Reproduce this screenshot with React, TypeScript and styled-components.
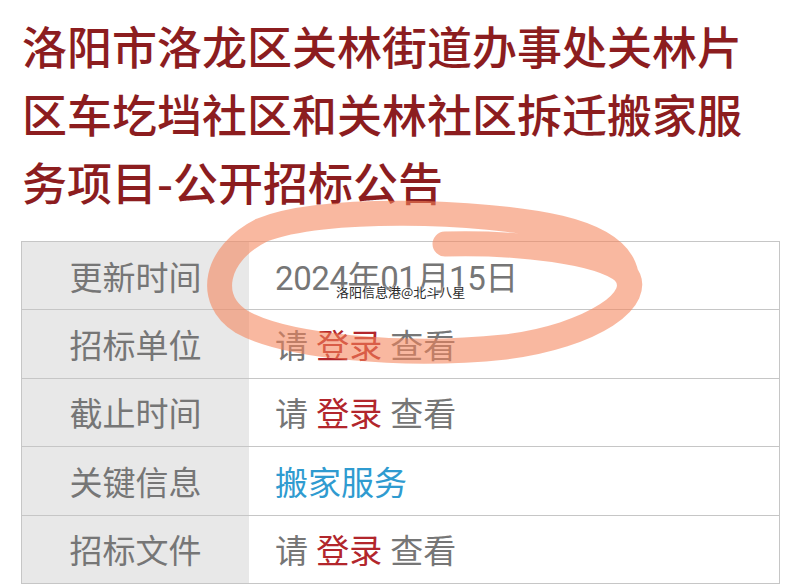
import styled, { createGlobalStyle } from 'styled-components'

const GlobalStyle = createGlobalStyle`
  html, body {
    margin: 0;
    padding: 0;
    background: #ffffff;
  }
  body {
    font-family: Roboto, "Noto Sans CJK SC", sans-serif;
  }
`

const rows: { label: string; kind: 'date' | 'login' | 'link'; text?: string }[] = [
  { label: '更新时间', kind: 'date', text: '2024年01月15日' },
  { label: '招标单位', kind: 'login' },
  { label: '截止时间', kind: 'login' },
  { label: '关键信息', kind: 'link', text: '搬家服务' },
  { label: '招标文件', kind: 'login' },
]

export default function App() {
  return (
    <>
      <GlobalStyle />
      <Page>
        <Title>洛阳市洛龙区关林街道办事处关林片区车圪垱社区和关林社区拆迁搬家服务项目-公开招标公告</Title>
        <Table>
          {rows.map((row) => (
            <Row key={row.label}>
              <Label>{row.label}</Label>
              <Value>
                {row.kind === 'date' && <Plain $tight>{row.text}</Plain>}
                {row.kind === 'link' && <Link>{row.text}</Link>}
                {row.kind === 'login' && (
                  <Plain>
                    请 <Login>登录</Login> 查看
                  </Plain>
                )}
              </Value>
            </Row>
          ))}
        </Table>
        <Scribble viewBox="0 0 800 585" aria-hidden="true">
          <path
            d="M 445 244 C 520 242 600 252 624 272 C 648 298 592 336 505 347 C 400 358 285 346 242 322 C 206 300 214 254 262 230 C 322 206 480 210 560 228 C 602 238 622 254 626 274"
            fill="none"
            stroke="rgba(244,132,92,0.58)"
            strokeWidth="25"
            strokeLinecap="round"
            strokeLinejoin="round"
          />
        </Scribble>
        <Watermark>洛阳信息港@北斗八星</Watermark>
      </Page>
    </>
  )
}

const Page = styled.div`
  position: relative;
  width: 800px;
  height: 585px;
  overflow: hidden;
  padding: 12px 20px 0 21px;
  box-sizing: border-box;
`

const Title = styled.h1`
  margin: 0 0 25px 1px;
  font-family: "Noto Sans CJK SC", sans-serif;
  font-size: 45px;
  font-weight: 500;
  line-height: 68px;
  color: #8c1d1f;
  width: 758px;
`

const Table = styled.div`
  width: 759px;
  border: 1px solid #c6c6c6;
  border-top: none;
  box-sizing: border-box;
`

const Row = styled.div`
  display: grid;
  grid-template-columns: 227px 1fr;
  height: 68.4px;
  border-top: 1px solid #c6c6c6;
  box-sizing: border-box;
`

const Label = styled.div`
  display: flex;
  align-items: center;
  justify-content: center;
  background: #e8e8e8;
  font-family: "Noto Sans CJK SC", sans-serif;
  font-size: 33px;
  color: #767676;
`

const Value = styled.div`
  display: flex;
  align-items: center;
  padding-left: 26px;
  background: #ffffff;
  font-size: 33px;
`

const Plain = styled.span<{ $tight?: boolean }>`
  color: #767676;
  white-space: pre;
  letter-spacing: ${(p) => (p.$tight ? '-0.4px' : '0')};
`

const Login = styled.span`
  color: #b2262c;
`

const Link = styled.span`
  color: #2f9bd0;
`

const Scribble = styled.svg`
  position: absolute;
  left: 0;
  top: 0;
  width: 800px;
  height: 585px;
  pointer-events: none;
`

const Watermark = styled.div`
  position: absolute;
  left: 336px;
  top: 283px;
  font-family: "Noto Sans CJK SC", sans-serif;
  font-size: 13px;
  line-height: 18px;
  color: #2a2a2a;
  text-shadow: 0 0 2px #ffffff, 0 0 2px #ffffff, 0 0 1px #ffffff;
`
